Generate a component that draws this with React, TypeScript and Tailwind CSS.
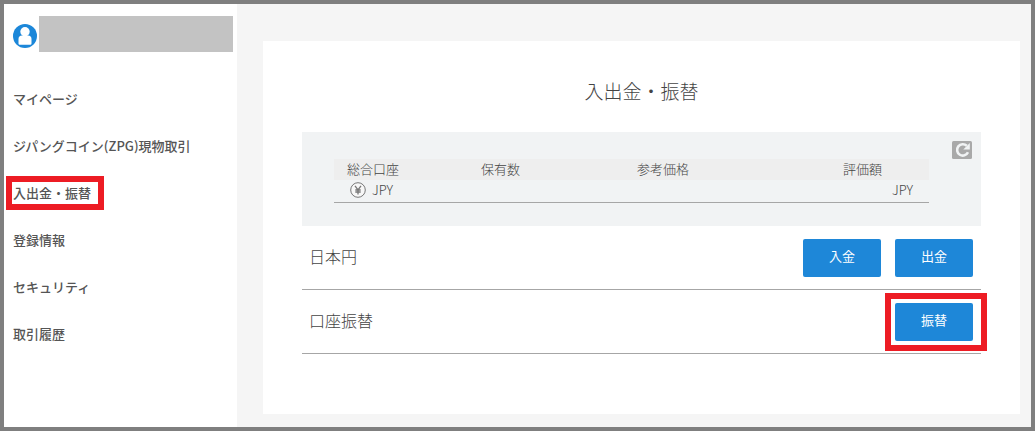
import React from "react";

const menu = [
  { label: "マイページ" },
  { label: "ジパングコイン(ZPG)現物取引" },
  { label: "入出金・振替", marked: true },
  { label: "登録情報" },
  { label: "セキュリティ" },
  { label: "取引履歴" },
];

function UserIcon() {
  return (
    <svg className="size-6 shrink-0" viewBox="0 0 24 24" aria-hidden="true">
      <circle cx="12" cy="12" r="12" fill="#1c87d9" />
      <circle cx="12" cy="7.700" r="4.700" fill="#fff" />
      <path d="M5.500 19.500v-4.500a3.500 3.500 0 0 1 3.500-3.500h6a3.500 3.500 0 0 1 3.500 3.500v4.500a1.200 1.200 0 0 1-1.200 1.200H6.700a1.200 1.200 0 0 1-1.200-1.200z" fill="#fff" />
    </svg>
  );
}

function YenIcon() {
  return (
    <svg className="size-4 shrink-0" viewBox="0 0 16 16" fill="none" stroke="#777" aria-hidden="true">
      <circle cx="8" cy="8" r="7.300" fill="#f7f7f7" />
      <path d="M5 3.800l3 4.200L11 3.800M8 8v4.500M5.300 8h5.400M5.300 10h5.400" strokeWidth="1.300" />
    </svg>
  );
}

function ReloadIcon() {
  return (
    <svg className="block h-[18px] w-5" viewBox="0 0 20 18" fill="none" aria-hidden="true">
      <rect width="20" height="18" rx="1.500" fill="#a9a9a9" />
      <path d="M16 11.300A5.700 5.700 0 1 1 14.800 4.800" stroke="#f1f3f4" strokeWidth="2.600" />
      <path d="M17.800 2v6.500h-6.500z" fill="#f1f3f4" />
    </svg>
  );
}

function ActionButton({ label, marked }: { label: string; marked?: boolean }) {
  return (
    <div className="relative">
      <button
        type="button"
        className="block h-[38px] w-[78px] cursor-pointer rounded-xs bg-[#1e87d8] pb-1 text-[13px] text-white"
      >
        {label}
      </button>
      {marked && (
        <span className="pointer-events-none absolute -top-2.5 -right-3.5 -bottom-2.5 -left-2.5 border-6 border-[#ed1c24]" />
      )}
    </div>
  );
}

function TransferRow({ title, children }: { title: string; children: React.ReactNode }) {
  return (
    <div className="flex h-16 items-center justify-between border-b border-[#a6a6a6] pr-2 pl-[7px]">
      <h2 className="pb-1 text-[16px] font-light">{title}</h2>
      <div className="flex gap-3.5">{children}</div>
    </div>
  );
}

export default function App() {
  return (
    <div className="flex min-h-screen border-4 border-[#7f7f7f] bg-[#f5f5f5] font-['Noto_Sans_CJK_JP',sans-serif] text-[#444]">
      <aside className="w-[233px] shrink-0 bg-white pt-3">
        <div className="flex items-end gap-0.5 pr-1 pl-[9px]">
          <div className="pb-1">
            <UserIcon />
          </div>
          <div className="h-9 flex-1 bg-[#c3c3c3]" />
        </div>
        <nav className="mt-[23px] text-[13px]">
          <ul>
            {menu.map(({ label, marked }) => (
              <li key={label} className="flex h-[47px] items-center pl-[9px]">
                <a href="#" className="relative font-medium text-[#555]">
                  {label}
                  {marked && (
                    <span className="pointer-events-none absolute -top-[7px] -right-[13px] -bottom-2 -left-[7px] border-6 border-[#ed1c24]" />
                  )}
                </a>
              </li>
            ))}
          </ul>
        </nav>
      </aside>

      <main className="flex flex-1 flex-col pt-[37px] pr-[11px] pb-[13px] pl-[26px]">
        <section className="flex-1 bg-white pt-9 pr-[39px] pl-[39px]">
          <h1 className="text-center text-[19px] leading-7 font-light">入出金・振替</h1>

          <div className="relative mt-[27px] h-[94px] bg-[#f1f3f4] pt-[27px] pr-[52px] pl-8">
            <table className="w-full table-fixed border-b border-[#a6a6a6] text-[13px] leading-[18px] font-light">
              <thead>
                <tr className="h-[21px] bg-[#eeeeee]">
                  <th className="w-[134px] pb-0.5 pl-[13px] text-left font-light">総合口座</th>
                  <th className="w-[156px] pb-0.5 pl-[13px] text-left font-light">保有数</th>
                  <th className="pb-0.5 pl-[13px] text-left font-light">参考価格</th>
                  <th className="w-[150px] pr-[47px] pb-0.5 text-right font-light">評価額</th>
                </tr>
              </thead>
              <tbody>
                <tr className="h-[22px]">
                  <td className="pb-0.5 pl-4">
                    <span className="flex items-center gap-1.5">
                      <YenIcon />
                      JPY
                    </span>
                  </td>
                  <td />
                  <td />
                  <td className="pr-4 pb-0.5 text-right">JPY</td>
                </tr>
              </tbody>
            </table>
            <button type="button" aria-label="更新" className="absolute top-[9px] right-[9px] cursor-pointer">
              <ReloadIcon />
            </button>
          </div>

          <TransferRow title="日本円">
            <ActionButton label="入金" />
            <ActionButton label="出金" />
          </TransferRow>
          <TransferRow title="口座振替">
            <ActionButton label="振替" marked />
          </TransferRow>
        </section>
      </main>
    </div>
  );
}
